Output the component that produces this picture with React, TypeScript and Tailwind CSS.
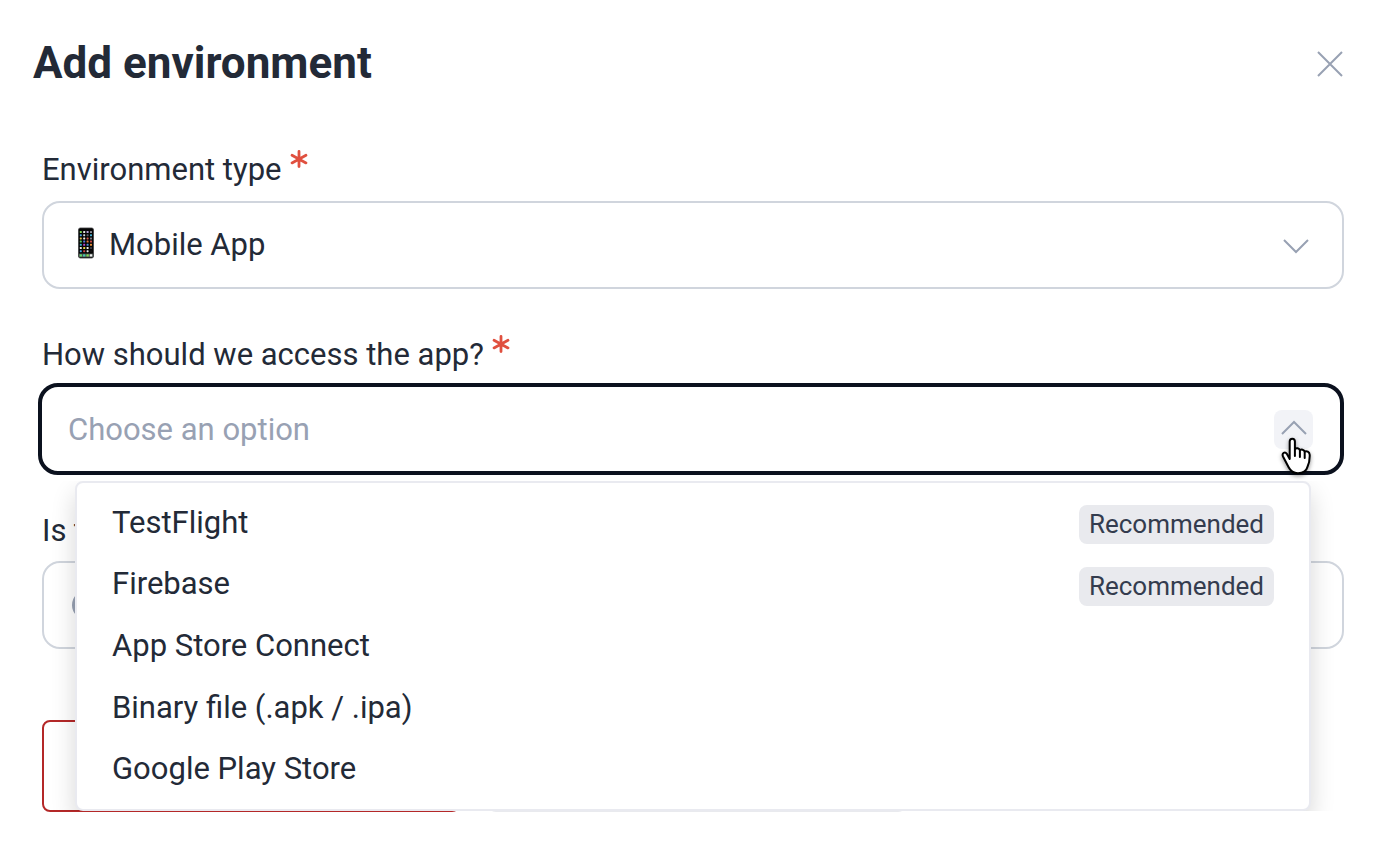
import React from 'react';

const options = [
  { name: 'TestFlight', recommended: true },
  { name: 'Firebase', recommended: true },
  { name: 'App Store Connect', recommended: false },
  { name: 'Binary file (.apk / .ipa)', recommended: false },
  { name: 'Google Play Store', recommended: false },
];

const appIconColors = [
  '#7fd858', '#e8e8e8', '#b9a2d8', '#8f8f9a',
  '#4aa8e8', '#d8d8d8', '#55606b', '#48b8d8',
  '#e8c048', '#f0f0f0', '#d85848', '#7d7d86',
  '#58c860', '#5878e0', '#e07838', '#c84848',
  '#38b0d0', '#c048c8', '#4890e0', '#e89038',
  '#ececec', '#e8d848', '#f0f0f0', '#3c3c44',
  '#48a8e8', '#d84848', '#ececec', '#111111',
];

const Required: React.FC = () => (
  <svg className="w-[18px] h-5" viewBox="0 0 18 20" fill="none" stroke="#e0503f" strokeWidth="2.8" strokeLinecap="round" aria-hidden="true">
    <path d="M9 1.500v15M2 5.300l14 7.600M2 12.900l14-7.600" />
  </svg>
);

const Chevron: React.FC<{ up?: boolean; className?: string }> = ({ up, className }) => (
  <svg className={className} width="28" height="16" viewBox="0 0 28 16" fill="none" stroke="#98a1b3" strokeWidth="2" aria-hidden="true">
    <path d={up ? 'M2 14L14 2l12 12' : 'M2 2l12 12L26 2'} />
  </svg>
);

const PhoneIcon: React.FC = () => (
  <svg className="absolute left-[35px] top-[26px] pointer-events-none" width="18" height="32" viewBox="0 0 18 32" aria-hidden="true">
    <rect x="1.500" y="1" width="15" height="30" rx="1.800" fill="#050505" stroke="#3d3d40" strokeWidth="0.800" />
    {appIconColors.map((color, i) => (
      <rect key={i} x={2.8 + (i % 4) * 3.4} y={4 + Math.floor(i / 4) * 3.2} width="2" height="2" rx="0.6" fill={color} />
    ))}
    <rect x="2" y="26.6" width="14" height="3.6" fill="#4b5550" />
    {['#64d868', '#48c8b0', '#80d850', '#f0f0f0'].map((color, i) => (
      <rect key={color} x={2.6 + i * 3.4} y="27.2" width="2.4" height="2.4" rx="0.6" fill={color} />
    ))}
  </svg>
);

const HandCursor: React.FC = () => (
  <svg
    className="absolute right-[29px] top-[54px] pointer-events-none drop-shadow-[0_2px_2px_rgba(0,0,0,0.4)]"
    width="34"
    height="42"
    viewBox="0 0 34 42"
    aria-hidden="true"
  >
    <path
      d="M8.700 22V4.500c0-3.800 5.200-3.800 5.200 0V12c1.400-1.400 4.400-1 5 1.200 1.500-1.200 4.200-.6 4.700 1.300 2-.8 4.900.2 5.100 3.300.2 5.200-.6 8.600-2.300 12.200-1.200 4.600-4.200 6.200-9.400 6.200-5.300 0-7.500-2.200-9.500-6.200L2 19.500c-1.500-3.500 2-5.100 3.800-2.700z"
      fill="#fff"
      stroke="#000"
      strokeWidth="2"
      strokeLinejoin="round"
    />
    <path d="M13.900 12v7M18.900 13.500v6.500M23.700 15v6" fill="none" stroke="#000" strokeWidth="2" strokeLinecap="round" />
  </svg>
);

const labelClass = 'flex items-start gap-2 h-10 text-[31px] leading-10';
const fieldClass = 'block w-full h-[88px] rounded-[18px] border-2 border-[#d0d5dd] bg-white appearance-none outline-none text-[31px]';

const App: React.FC = () => {
  return (
    <main className="min-h-screen bg-white font-['Roboto',sans-serif] text-[#232a37]">
      <header className="flex items-center justify-between pl-[33px] pr-10 pt-[34px]">
        <h1 className="text-[44px] leading-[58px] font-bold">Add environment</h1>
        <button type="button" aria-label="Close" className="w-7 h-7">
          <svg width="28" height="28" viewBox="0 0 28 28" fill="none" stroke="#98a1b3" strokeWidth="2">
            <path d="M2 3l24 24M26 3L2 27" />
          </svg>
        </button>
      </header>

      <form className="pl-[42px] pr-10 pt-[58px]">
        <label htmlFor="type" className={labelClass}>Environment type <Required /></label>
        <div className="relative mt-[11px]">
          <select id="type" className={`${fieldClass} pl-[65px]`}>
            <option>Mobile App</option>
          </select>
          <PhoneIcon />
          <Chevron className="absolute right-[34px] top-[37px] pointer-events-none" />
        </div>

        <label htmlFor="access" className={`${labelClass} mt-[46px]`}>How should we access the app? <Required /></label>
        <div className="relative mt-2 -ml-1">
          <input
            id="access"
            role="combobox"
            aria-expanded="true"
            aria-controls="access-options"
            placeholder="Choose an option"
            className="block w-full h-[92px] rounded-[20px] border-4 border-[#0b111e] bg-white outline-none pl-[26px] pr-20 text-[31px] placeholder:text-[#98a1b3]"
          />
          <button type="button" aria-label="Toggle options" className="absolute right-[31px] top-[27px] w-[39px] h-[39px] rounded-lg bg-[#f2f3f7] flex justify-center pt-[10px]">
            <Chevron up />
          </button>

          <div className="absolute z-10 left-0 right-0 top-[98px] pl-[37px] pr-[33px] overflow-hidden">
            <ul id="access-options" role="listbox" className="grid auto-rows-fr h-[330px] py-[9px] rounded-lg border-2 border-[#e9eaf0] bg-white shadow-[0_12px_24px_rgba(0,0,0,0.16)]">
              {options.map((option) => (
                <li key={option.name} role="option" aria-selected="false" className="flex items-center justify-between px-[35px] text-[31px] leading-10">
                  {option.name}
                  {option.recommended && (
                    <span className="mt-1 h-[39px] px-2.5 rounded-lg bg-[#e9eaee] text-[#343c4e] text-[26px] leading-[39px]">Recommended</span>
                  )}
                </li>
              ))}
            </ul>
          </div>
          <HandCursor />
        </div>

        <label htmlFor="login" className={`${labelClass} mt-9`}>Is this</label>
        <div className="relative mt-[10px]">
          <input id="login" className={`${fieldClass} px-20`} />
          <span className="absolute left-[30px] top-[29px] w-[30px] h-[30px] rounded-full bg-[#98a1b3]" />
        </div>

        <div className="flex gap-7 mt-[71px]">
          <button type="button" aria-label="Cancel" className="w-[418px] h-[92px] rounded-lg border-2 border-[#b42828] bg-white" />
          <button type="submit" aria-label="Add environment" className="w-[418px] h-[92px] rounded-lg bg-[#e9eaee]" />
        </div>
      </form>
    </main>
  );
};

export default App;
